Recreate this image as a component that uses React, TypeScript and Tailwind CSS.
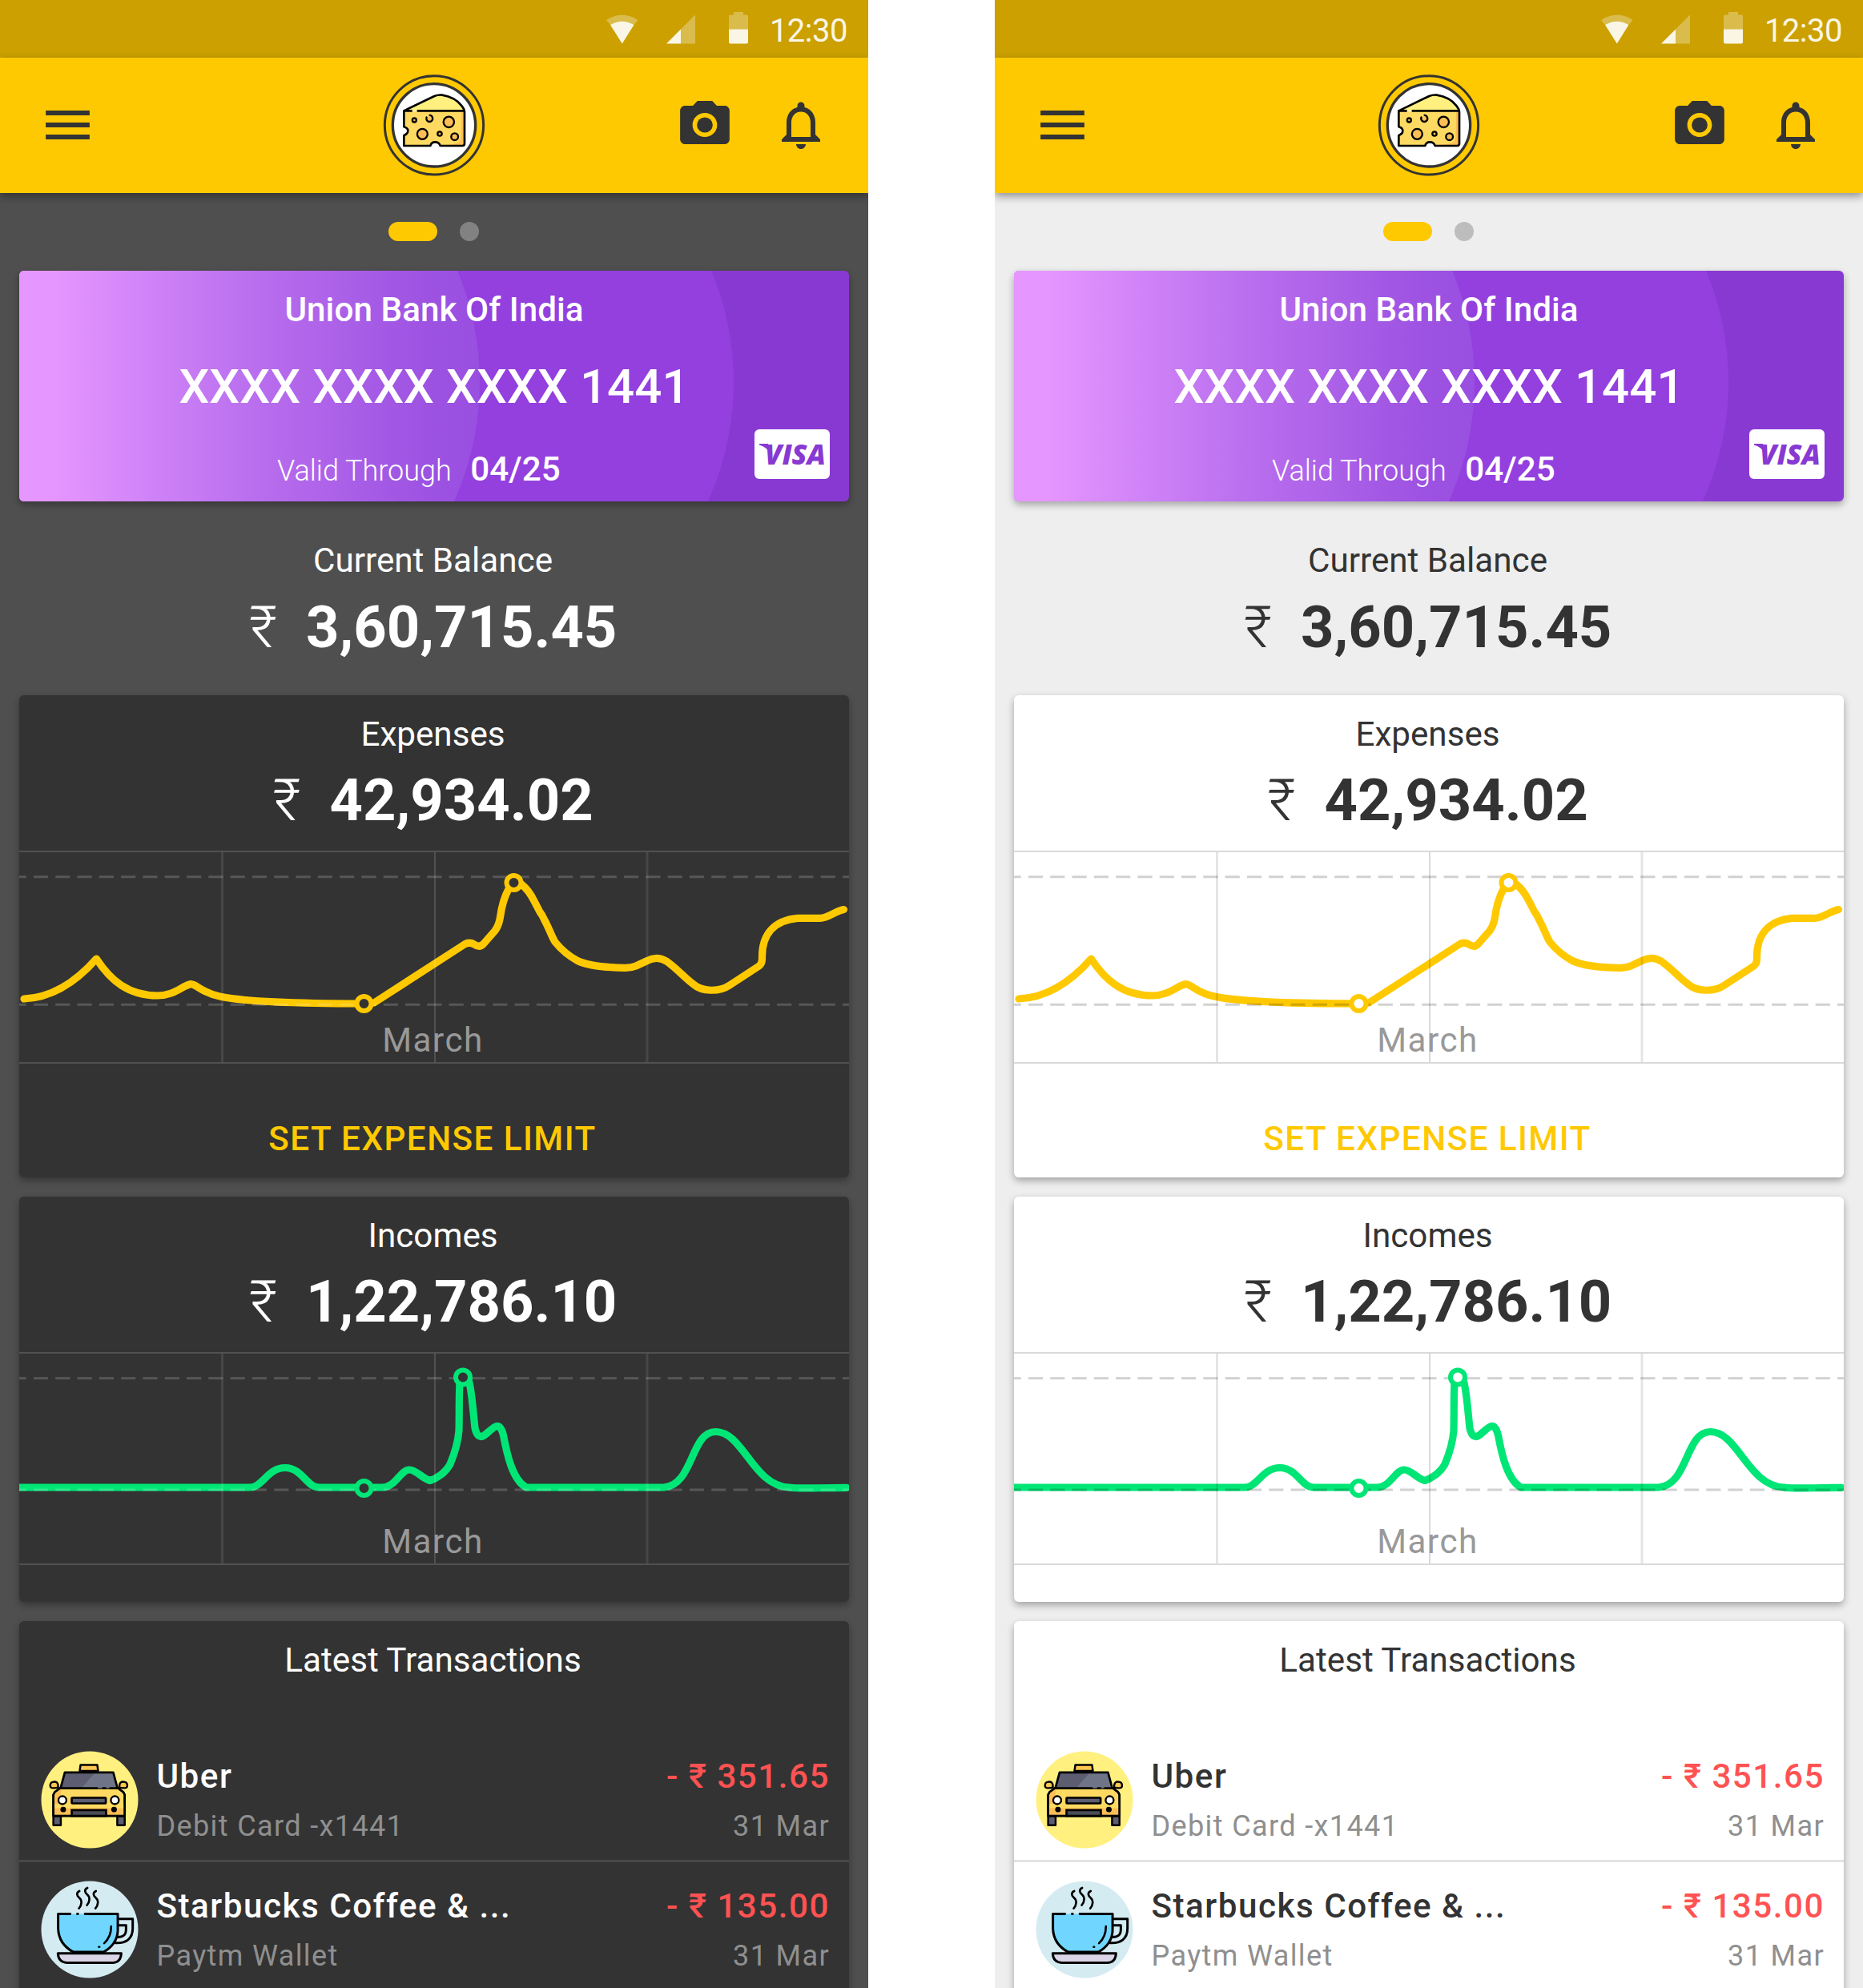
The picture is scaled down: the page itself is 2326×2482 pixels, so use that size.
import React from "react";

type Theme = {
  name: "dark" | "light";
  page: string;
  card: string;
  text: string;
  muted: string;
  divider: string;
  dot: string;
  surface: string;
  grid: string;
  shadow: string;
};

const dark: Theme = {
  name: "dark",
  page: "bg-[#4f4f4f]",
  card: "bg-[#333333]",
  text: "text-white",
  muted: "text-[#8f8f8f]",
  divider: "bg-[#484848]",
  dot: "bg-[#828282]",
  surface: "#333333",
  grid: "#ffffff",
  shadow: "shadow-[0_4px_10px_rgba(0,0,0,0.32)]",
};

const light: Theme = {
  name: "light",
  page: "bg-[#eeeeee]",
  card: "bg-white",
  text: "text-[#333333]",
  muted: "text-[#8f8f8f]",
  divider: "bg-[#e2e2e2]",
  dot: "bg-[#bdbdbd]",
  surface: "#ffffff",
  grid: "#000000",
  shadow: "shadow-[0_4px_10px_rgba(0,0,0,0.32)]",
};

function StatusBar() {
  return (
    <div className="flex h-[72px] shrink-0 items-start justify-end bg-[#cba000] pr-[26px]">
      <svg width="204" height="40" viewBox="757 14.5 204 40" className="mt-[14.5px]">
        <path d="M757 24.5Q776.8 11.500 796.500 24.500L791.500 30.500Q776.800 22 762 30.500Z" fill="#fff" opacity=".3" />
        <path d="M762 30.500Q776.800 22 791.500 30.500L776.800 54Z" fill="#fff" opacity=".9" />
        <path d="M868 18V54H850V36Z" fill="#fff" opacity=".3" />
        <path d="M850 36V54H832Z" fill="#fff" opacity=".9" />
        <path d="M910 36V20Q910 18 912 18H916V14.500H928V18H932Q934 18 934 20V36Z" fill="#fff" opacity=".3" />
        <path d="M910 36H934V52Q934 54 932 54H912Q910 54 910 52Z" fill="#fff" opacity=".9" />
      </svg>
      <span className="mt-[15px] text-[40px] leading-[48px] tracking-[-0.5px] text-white/90">12:30</span>
    </div>
  );
}

function CheeseLogo() {
  return (
    <svg width="128" height="128" viewBox="24 37 384 384">
      <circle cx="216" cy="230" r="185" fill="none" stroke="#333" strokeWidth="9" />
      <circle cx="216" cy="230" r="155" fill="#fff" stroke="#333" strokeWidth="10" />
      <path d="M103 176L217 121Q232 115 246 117Q295 125 320 158Q327 167 329 176Z" fill="#fff080" />
      <path
        d="M103 178H330V300Q330 307 322 307H239Q235 293 220 293Q205 293 202 307H103V268Q118 263 118 251Q118 240 103 236Z"
        fill="#ffda62"
      />
      <path d="M318 180H329V300Q329 306 322 306H245Q300 303 312 290Q318 280 318 180Z" fill="#fdbf55" />
      <g fill="#fdbf55" stroke="#000" strokeWidth="7">
        <circle cx="142" cy="211" r="7.500" />
        <path d="M189 198A12 12 0 1 0 210 201M197 193A12 12 0 0 1 210 201" />
        <circle cx="271" cy="218" r="20" />
        <circle cx="172" cy="263" r="19.500" />
        <circle cx="237" cy="262" r="8" />
        <circle cx="293" cy="273" r="13" />
      </g>
      <g fill="none" stroke="#000" strokeWidth="8" strokeLinejoin="round">
        <path d="M103 176L217 121Q232 115 246 117Q295 125 320 158Q329 169 330 180V298Q330 307 322 307H239Q235 293 220 293Q205 293 202 307H103V268Q118 263 118 251Q118 240 103 236V176H134" />
        <path d="M152 176H328" />
      </g>
    </svg>
  );
}

function AppBar() {
  return (
    <div className="relative z-10 grid h-[169px] shrink-0 grid-cols-[1fr_auto_1fr] items-center bg-[#ffc901] px-12 pb-px shadow-[0_4px_10px_rgba(0,0,0,0.4)]">
      <svg width="73" height="72" viewBox="0 0 24 24" fill="#333" preserveAspectRatio="none">
        <path d="M3 18h18v-2H3v2zm0-5h18v-2H3v2zm0-7v2h18V6H3z" />
      </svg>
      <CheeseLogo />
      <div className="flex items-center justify-end gap-[47px]">
        <svg width="74" height="72" viewBox="0 0 24 24" fill="#333" preserveAspectRatio="none">
          <circle cx="12" cy="12" r="3.200" />
          <path d="M9 2L7.170 4H4c-1.100 0-2 .9-2 2v12c0 1.100.9 2 2 2h16c1.100 0 2-.9 2-2V6c0-1.100-.9-2-2-2h-3.170L15 2H9zm3 15c-2.760 0-5-2.240-5-5s2.240-5 5-5 5 2.240 5 5-2.240 5-5 5z" />
        </svg>
        <svg width="72" height="72" viewBox="0 0 24 24" fill="#333">
          <path d="M12 22c1.100 0 2-.9 2-2h-4c0 1.100.9 2 2 2zm6-6v-5c0-3.070-1.630-5.640-4.500-6.320V4c0-.83-.67-1.500-1.500-1.500s-1.500.67-1.500 1.500v.68C7.640 5.360 6 7.920 6 11v5l-2 2v1h16v-1l-2-2zm-2 1H8v-6c0-2.480 1.510-4.500 4-4.500s4 2.020 4 4.500v6z" />
        </svg>
      </div>
    </div>
  );
}

function BankCard({ t }: { t: Theme }) {
  const gradientId = `card-${t.name}`;
  return (
    <div className={`relative mx-6 h-[288px] shrink-0 overflow-hidden rounded-md text-white ${t.shadow}`}>
      <svg width="1036" height="288" viewBox="24 338 1036 288" className="absolute inset-0">
        <defs>
          <linearGradient id={gradientId} gradientUnits="userSpaceOnUse" x1="66" y1="0" x2="599" y2="0">
            <stop offset="0" stopColor="#e596ff" />
            <stop offset="0.450" stopColor="#bb70ef" />
            <stop offset="0.880" stopColor="#9d52e2" />
            <stop offset="1" stopColor="#994fe0" />
          </linearGradient>
        </defs>
        <rect x="24" y="338" width="1036" height="288" fill="#8839d2" />
        <circle cx="555" cy="477" r="361" fill="#9340df" />
        <circle cx="238" cy="477" r="361" fill={`url(#${gradientId})`} />
        <rect x="24" y="338" width="120" height="288" fill={`url(#${gradientId})`} />
      </svg>
      <div className="relative flex flex-col pt-[25px]">
        <div className="text-center text-[42.200px] leading-[48px] font-medium tracking-[0.050px]">
          Union Bank Of India
        </div>
        <div className="mt-9 text-center text-[60px] leading-[72px] font-medium tracking-[0.080px]">
          XXXX XXXX XXXX 1441
        </div>
        <div className="mt-[43px] ml-[322px] flex items-baseline gap-[23.500px] leading-[48px]">
          <span className="text-[36px] font-light">Valid Through</span>
          <span className="text-[42.200px] font-medium">04/25</span>
        </div>
      </div>
      <div className="absolute right-6 bottom-7 h-[62px] w-[94px] rounded-[6px] bg-white">
        <svg width="94" height="62" viewBox="0 0 94 62">
          <text
            x="13"
            y="44"
            textLength="76"
            lengthAdjust="spacingAndGlyphs"
            fontFamily="'Open Sans'"
            fontSize="36"
            fontWeight="800"
            fontStyle="italic"
            fill="#8839d2"
          >
            VISA
          </text>
          <path d="M6 18H17L20 32Q16 22 6 19.500Z" fill="#8839d2" />
        </svg>
      </div>
    </div>
  );
}

function Amount({ label, value, t }: { label: string; value: string; t: Theme }) {
  return (
    <div className={`flex flex-col pr-[3px] text-center ${t.text}`}>
      <div className="text-[42.200px] leading-[48px]">{label}</div>
      <div className="mt-[17.500px] flex items-baseline justify-center gap-9 text-[72.300px] leading-[84px]">
        <span className="font-light">₹</span>
        <span className="font-bold">{value}</span>
      </div>
    </div>
  );
}

type ChartProps = {
  t: Theme;
  color: string;
  path: string;
  low: number;
  points: [number, number][];
};

function Chart({ t, color, path, low, points }: ChartProps) {
  return (
    <div className="relative h-[266px]">
      <svg width="1036" height="266" viewBox="24 1062 1036 266" className="absolute inset-0">
        <path d={path} fill="none" stroke={color} strokeWidth="9.200" strokeLinecap="round" strokeLinejoin="round" />
        <g stroke={t.grid} fill="none">
          <path d="M24 1063H1060M543 1064V1326M24 1327H1060" strokeWidth="2" opacity="0.150" />
          <path d="M277.500 1064V1326M808 1064V1326" strokeWidth="3" opacity="0.100" />
          <path
            d={`M24 1094.700H1060M24 ${low}H1060`}
            strokeWidth="3"
            strokeDasharray="18.200 9.100"
            strokeDashoffset="9.400"
            opacity="0.18"
          />
        </g>
        {points.map(([x, y]) => (
          <circle key={x} cx={x} cy={y} r="9" fill={t.surface} stroke={color} strokeWidth="6" />
        ))}
      </svg>
      <div className="relative pt-[213.700px] pr-[3px] text-center text-[42.200px] leading-[48px] tracking-[1.500px] text-[#999999]">
        March
      </div>
    </div>
  );
}

const expensePath =
  "M30 1247C54 1246 86 1236 120.300 1197C138 1224 160 1243 197 1243C218 1243 228 1230 238.500 1228.600C246 1229 252 1240 276.500 1244.500C310 1251 380 1253 454 1253L467 1252L580 1179Q586 1175.500 592 1179Q599 1184 604 1178L618 1162Q623 1155 624.500 1145C626.500 1130 630 1119 635.500 1109L642 1103L651 1104Q660 1111 667 1125L674 1138.500Q677 1142 680 1149C686 1160 689 1170 693 1176C701 1186 711 1194 721 1199.500C734 1205.500 755 1208 780 1208.300Q788 1208.500 794 1206L808 1199.500Q820 1193 832 1200C845 1209 855 1221 866 1229C876 1238 898 1239 911 1230L947 1206.500Q952 1203 951.500 1196C951 1168 965 1149 996 1146.300L1024 1146.300C1034 1146 1042 1138 1053.500 1135.500";

// Drawn in the expense chart's coordinate space.
const incomePath =
  "M24 1231H312C328 1231 334 1206.500 356 1206.500C377 1206.500 383 1231 398 1231H477C494 1231 500 1209 511 1209C520 1209 527 1220 537 1222.500C545 1220 556 1213 562 1202C567 1190 572 1173 573 1160C573.500 1140 573 1115 574 1101L578 1094L585 1097C589 1108 591 1140 593 1157Q596 1170 603 1167C610 1163 615 1155 621 1154.700Q626 1155 628.500 1166C633 1190 640 1222 657 1231H829C866 1228 862 1161.500 893.500 1161.500C928 1161.500 940 1229 985 1231C1000 1233 1015 1231.500 1057 1231.300";

function TaxiAvatar() {
  return (
    <svg width="122" height="122" viewBox="30 47 367 367" className="shrink-0">
      <circle cx="213.500" cy="230.500" r="182" fill="#fff080" />
      <g stroke="#000" strokeWidth="7.500" strokeLinejoin="round">
        <path d="M176 122L179 100H242L245 122Z" fill="#ffc751" />
        <path d="M77 292H105V326H77ZM317 292H345V326H317Z" fill="#5d5d72" />
        <path d="M102 187L82 202L77 212V291H345V212L340 202L320 187Z" fill="#ffda62" />
      </g>
      <path d="M96 197L106 191L102 240L98 287H81V212L86 202ZM81 252H341V287H81Z" fill="#fdbf55" />
      <path d="M81 246H341V262H81Z" fill="#ffda62" />
      <path d="M104 187L120 128H302L318 187Z" fill="#707487" />
      <path d="M104 187L120 128H234L182 187Z" fill="#5d5d72" />
      <g stroke="#000" strokeWidth="8" strokeLinecap="round" strokeLinejoin="round" fill="none">
        <path d="M241 187H104L120 128H302L318 187H291M264 187H272" />
        <path d="M320 187L340 202L345 212V291H77V212L82 202L102 187" />
      </g>
      <g stroke="#000" strokeWidth="7">
        <path d="M95 184C90 186 80 187 71 186C62 182 64 166 74 164C88 160 96 166 95 184ZM325 184C330 186 340 187 349 186C358 182 356 166 346 164C332 160 324 166 325 184Z" fill="#ffc751" />
        <rect x="146" y="223" width="128" height="21" rx="2" fill="#5d5d72" strokeWidth="8" />
        <path d="M146 291V269H275V291Z" fill="#494d57" strokeWidth="8" />
        <circle cx="111" cy="232" r="15" fill="#fff" />
        <circle cx="308" cy="232" r="15" fill="#fff" />
      </g>
      <circle cx="114" cy="267" r="10.500" />
      <circle cx="305" cy="267" r="10.500" />
    </svg>
  );
}

function CoffeeAvatar() {
  return (
    <svg width="122" height="122" viewBox="30 534 367 367" className="shrink-0">
      <circle cx="213.500" cy="717.500" r="182" fill="#d5ebf2" />
      <path d="M95 659H319V712Q314 772 266 802H152Q97 772 95 714Z" fill="#70d6ff" />
      <path d="M94 807H332Q330 841 302 842H128Q96 841 94 807Z" fill="#dcd5e8" />
      <g stroke="#000" strokeWidth="9" strokeLinecap="round" strokeLinejoin="round" fill="none">
        <path d="M140 659H95V714Q97 772 152 802H266Q317 772 319 722V659H196M167 659H169" />
        <path d="M94 807H332Q330 841 302 842H128Q96 841 94 807Z" />
        <path d="M320 678H375V714C375 752 350 770 310 768" />
        <path d="M320 702H350V716C350 738 340 745 318 746" />
        <path d="M294 706C294 732 284 754 268 769M248 783H250" strokeWidth="8" />
        <path
          d="M175 573C160 580 167 592 174 598C186 608 184 626 173 638M205 561C190 568 197 580 204 586C216 596 214 614 203 626M237 573C222 580 229 592 236 598C248 608 246 626 235 638"
          strokeWidth="8"
        />
      </g>
    </svg>
  );
}

type TransactionProps = {
  t: Theme;
  icon: React.ReactNode;
  name: string;
  source: string;
  amount: string;
  date: string;
};

function Transaction({ t, icon, name, source, amount, date }: TransactionProps) {
  return (
    <div className="flex h-[160px] pr-6 pl-[26.500px]">
      <div className="pt-6">{icon}</div>
      <div className="ml-[23px] flex flex-1 flex-col pt-8">
        <div className="flex justify-between text-[42.200px] leading-[48px] font-medium tracking-[1.500px]">
          <span className={t.text}>{name}</span>
          <span className="text-[#ff5252]">{amount}</span>
        </div>
        <div
          className={`mt-[14.500px] flex justify-between text-[36.100px] leading-[48px] tracking-[1.350px] ${t.muted}`}
        >
          <span>{source}</span>
          <span>{date}</span>
        </div>
      </div>
    </div>
  );
}

function Phone({ t }: { t: Theme }) {
  const card = `mx-6 shrink-0 rounded-md ${t.card} ${t.shadow}`;
  return (
    <div className={`flex h-[2482px] w-[1084px] flex-col overflow-hidden ${t.page}`}>
      <StatusBar />
      <AppBar />
      <div className="flex h-[97px] shrink-0 items-center justify-center gap-7 pr-[2px] pb-[2px]">
        <div className="h-6 w-[61px] rounded-full bg-[#ffc901]" />
        <div className={`size-6 rounded-full ${t.dot}`} />
      </div>
      <BankCard t={t} />
      <div className="mt-[50px] mb-[42px] shrink-0">
        <Amount t={t} label="Current Balance" value="3,60,715.45" />
      </div>
      <div className={`${card} flex h-[602px] flex-col pt-[25px]`}>
        <Amount t={t} label="Expenses" value="42,934.02" />
        <div className="mt-[19.500px]">
          <Chart
            t={t}
            color="#ffc901"
            path={expensePath}
            low={1254.3}
            points={[
              [454.5, 1253],
              [641.5, 1102],
            ]}
          />
        </div>
        <div className="mt-[70px] pr-1 text-center text-[42.200px] leading-[48px] font-medium tracking-[1.450px] text-[#ffc901]">
          SET EXPENSE LIMIT
        </div>
      </div>
      <div className={`${card} mt-6 flex h-[506px] flex-col pt-[25px]`}>
        <Amount t={t} label="Incomes" value="1,22,786.10" />
        <div className="mt-[19.500px]">
          <Chart
            t={t}
            color="#00e676"
            path={incomePath}
            low={1234}
            points={[
              [454.5, 1232],
              [578, 1093.5],
            ]}
          />
        </div>
      </div>
      <div className={`${card} mt-6 flex h-[520px] flex-col pt-[25px]`}>
        <div className={`pr-[3px] text-center text-[42.200px] leading-[48px] ${t.text}`}>Latest Transactions</div>
        <div className="mt-[65px] flex flex-col">
          <Transaction
            t={t}
            icon={<TaxiAvatar />}
            name="Uber"
            source="Debit Card -x1441"
            amount="- ₹ 351.65"
            date="31 Mar"
          />
          <div className={`-mb-px h-[3px] ${t.divider}`} />
          <Transaction
            t={t}
            icon={<CoffeeAvatar />}
            name="Starbucks Coffee & ..."
            source="Paytm Wallet"
            amount="- ₹ 135.00"
            date="31 Mar"
          />
        </div>
      </div>
    </div>
  );
}

export default function App() {
  return (
    <div className="flex h-[2482px] w-[2326px] justify-between overflow-hidden bg-white font-['Roboto',sans-serif]">
      <Phone t={dark} />
      <Phone t={light} />
    </div>
  );
}
